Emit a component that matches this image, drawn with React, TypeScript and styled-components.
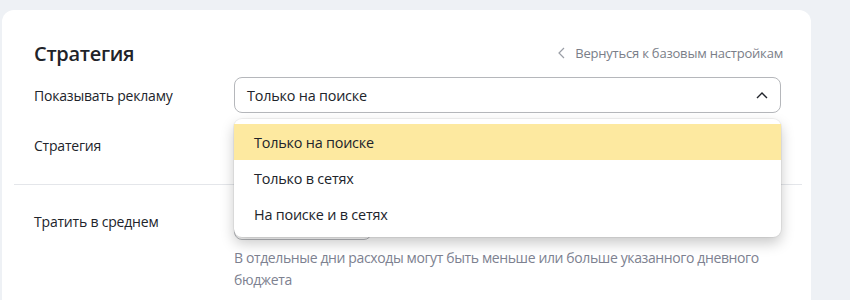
import styled, { createGlobalStyle } from 'styled-components';

const GlobalStyle = createGlobalStyle`
  html, body {
    margin: 0;
    padding: 0;
    background: #eef1f5;
    font-family: "Open Sans", "Noto Sans", sans-serif;
    color: #21242b;
  }
`;

const Page = styled.div`
  width: 850px;
  height: 300px;
  overflow: hidden;
  padding: 10px 0 0 2px;
  box-sizing: border-box;
`;

const Card = styled.section`
  width: 809px;
  height: 320px;
  background: #fff;
  border-radius: 12px;
  padding: 30px 12px 0;
  box-sizing: border-box;
`;

const Header = styled.div`
  display: flex;
  align-items: center;
  justify-content: space-between;
  padding: 0 16px 0 20px;
  height: 26px;
`;

const Title = styled.h2`
  margin: 0;
  font-size: 20px;
  font-weight: 600;
  color: #1f2329;
  letter-spacing: -0.3px;
`;

const BackLink = styled.a`
  display: flex;
  align-items: center;
  gap: 10px;
  font-size: 13px;
  color: #7a7e88;
  text-decoration: none;
  letter-spacing: -0.2px;
`;

const Section = styled.div<{ $offset?: number }>`
  display: flex;
  flex-direction: column;
  gap: 14px;
  padding: 0 20px;
  margin-top: ${({ $offset = 0 }) => $offset}px;
`;

const Row = styled.div`
  display: grid;
  grid-template-columns: 200px 547px;
  align-items: center;
`;

const Label = styled.label`
  font-size: 14px;
  color: #21242b;
  letter-spacing: -0.2px;
`;

const SelectWrap = styled.div`
  position: relative;
`;

const SelectBox = styled.div`
  height: 36px;
  box-sizing: border-box;
  border: 1px solid #b5b7bb;
  border-radius: 8px;
  display: flex;
  align-items: center;
  justify-content: space-between;
  padding: 0 12px;
  font-size: 14.4px;
  color: #21242b;
  letter-spacing: -0.2px;
  background: #fff;
`;

const Menu = styled.ul`
  position: absolute;
  top: calc(100% + 6px);
  left: 0;
  right: 0;
  margin: 0;
  padding: 5px 0;
  list-style: none;
  background: #fff;
  border-radius: 8px;
  box-shadow: 0 0 0 1px rgba(0, 0, 0, 0.05), 0 6px 14px rgba(0, 0, 0, 0.22);
  z-index: 10;
`;

const MenuItem = styled.li<{ $active?: boolean }>`
  height: 36px;
  display: flex;
  align-items: center;
  padding: 0 20px;
  font-size: 14.4px;
  letter-spacing: -0.2px;
  color: #21242b;
  background: ${({ $active }) => ($active ? '#fde9a0' : 'transparent')};
`;

const Divider = styled.hr`
  border: none;
  border-top: 1px solid #e4e6ea;
  margin: 21px 0 19px;
  width: 788px;
`;

const BudgetInput = styled.div`
  width: 138px;
  height: 36px;
  box-sizing: border-box;
  border: 1px solid #b5b7bb;
  border-radius: 8px;
`;

const Hint = styled.p`
  margin: 7px 0 0;
  font-size: 14px;
  line-height: 22px;
  color: #7d8190;
  letter-spacing: -0.38px;
  max-width: 547px;
`;

const BudgetRow = styled(Row)`
  align-items: start;
`;

const BudgetLabel = styled(Label)`
  line-height: 36px;
`;

const ChevronUp = () => (
  <svg width="12" height="8" viewBox="0 0 12 8" fill="none">
    <path d="M1 7l5-5 5 5" stroke="#21242b" strokeWidth="1.4" />
  </svg>
);

const ChevronLeft = () => (
  <svg width="7" height="12" viewBox="0 0 7 12" fill="none">
    <path d="M6 1L1 6l5 5" stroke="#9a9ea6" strokeWidth="1.2" />
  </svg>
);

const options = ['Только на поиске', 'Только в сетях', 'На поиске и в сетях'];

const App = () => (
  <Page>
    <GlobalStyle />
    <Card>
      <Header>
        <Title>Стратегия</Title>
        <BackLink href="#">
          <ChevronLeft />
          Вернуться к базовым настройкам
        </BackLink>
      </Header>
      <Section $offset={11}>
        <Row>
          <Label>Показывать рекламу</Label>
          <SelectWrap>
            <SelectBox>
              Только на поиске
              <ChevronUp />
            </SelectBox>
            <Menu>
              {options.map((o, i) => (
                <MenuItem key={o} $active={i === 0}>
                  {o}
                </MenuItem>
              ))}
            </Menu>
          </SelectWrap>
        </Row>
        <Row>
          <Label>Стратегия</Label>
          <SelectBox />
        </Row>
      </Section>
      <Divider />
      <Section>
        <BudgetRow>
          <BudgetLabel>Тратить в среднем</BudgetLabel>
          <div>
            <BudgetInput />
            <Hint>
              В отдельные дни расходы могут быть меньше или больше указанного дневного бюджета
            </Hint>
          </div>
        </BudgetRow>
      </Section>
    </Card>
  </Page>
);

export default App;
